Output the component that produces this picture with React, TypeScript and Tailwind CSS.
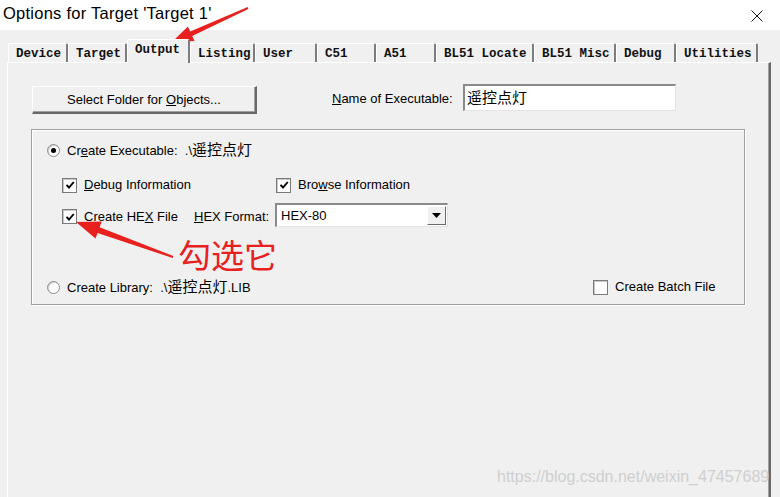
import React from "react";

const UI: React.CSSProperties = {
  fontFamily: '"Liberation Sans", "Noto Sans CJK SC", sans-serif',
};

function Check({ checked }: { checked: boolean }) {
  return (
    <div className="w-[15px] h-[15px] bg-white border border-[#7a7a7a] shadow-[inset_1px_1px_0_#c8c8c8] flex items-center justify-center shrink-0">
      {checked && (
        <svg width="10" height="10" viewBox="0 0 10 10">
          <path d="M1.5 4.8 L4 7.5 L8.8 2" fill="none" stroke="#000" strokeWidth="1.9" />
        </svg>
      )}
    </div>
  );
}

function Radio({ on }: { on: boolean }) {
  return (
    <div className="w-[13px] h-[13px] rounded-full bg-white border border-[#8c8c8c] shadow-[inset_1px_1px_0_#cfcfcf] flex items-center justify-center shrink-0">
      {on && <div className="w-[5px] h-[5px] rounded-full bg-black" />}
    </div>
  );
}

const tabs: { label: string; w: number; sel?: boolean }[] = [
  { label: "Device", w: 60 },
  { label: "Target", w: 59 },
  { label: "Output", w: 63, sel: true },
  { label: "Listing", w: 65 },
  { label: "User", w: 62 },
  { label: "C51", w: 59 },
  { label: "A51", w: 60 },
  { label: "BL51 Locate", w: 98 },
  { label: "BL51 Misc", w: 82 },
  { label: "Debug", w: 60 },
  { label: "Utilities", w: 82 },
];

export default function App() {
  return (
    <div
      className="relative w-[780px] h-[497px] bg-[#f0f0f0] overflow-hidden flex flex-col text-black"
      style={UI}
    >
      {/* Title bar */}
      <div className="h-[30px] bg-white flex items-start justify-between shrink-0">
        <div className="pl-[3px] pt-[2px] text-[16.5px] tracking-[0.25px] leading-[22px]">Options for Target 'Target 1'</div>
        <div className="pr-[17px] pt-[10px]">
          <svg width="12" height="12" viewBox="0 0 12 12">
            <path d="M0.5 0.5 L11.5 11.5 M11.5 0.5 L0.5 11.5" stroke="#111" strokeWidth="1" />
          </svg>
        </div>
      </div>

      {/* Tabs */}
      <div className="h-[32px] pt-[9px] pl-[8px] flex items-end shrink-0">
        {tabs.map((t) => (
          <div
            key={t.label}
            style={{ width: t.w, fontFamily: '"Liberation Mono", "DejaVu Sans Mono", monospace' }}
            className={
              t.sel
                ? "relative z-10 h-[24px] -mb-[1px] bg-[#f0f0f0] border-l border-t border-white border-r-2 border-r-[#7d7d7d] rounded-t-[2px] pl-[7px] pt-[2px] text-[12.5px] font-bold leading-[16px] whitespace-pre text-[#111]"
                : "h-[19px] bg-[#f0f0f0] border-l border-t border-white border-r-2 border-r-[#7d7d7d] rounded-t-[2px] pl-[7px] pt-[2px] text-[12.5px] font-bold leading-[16px] whitespace-pre text-[#111]"
            }
          >
            {t.label}
          </div>
        ))}
      </div>

      {/* Panel */}
      <div className="ml-[7px] w-[764px] flex-1 border-l border-t border-white border-r-2 border-r-[#696969] shadow-[inset_-1px_0_0_#a0a0a0] pl-[23px] pt-[21px] text-[13px]">
        {/* Top row */}
        <div className="flex items-start">
          <div className="mt-[2px] ml-[1px] w-[225px] h-[28px] bg-[#f0f0f0] border-l border-t border-white border-r-2 border-b-2 border-r-[#696969] border-b-[#696969] shadow-[inset_-1px_-1px_0_#a0a0a0] flex items-center justify-center">
            <span>
              Select Folder for <span className="underline">O</span>bjects...
            </span>
          </div>
          <div className="ml-[75px] w-[131px] h-[29px] flex items-center">
            <span>
              <span className="underline">N</span>ame of Executable:
            </span>
          </div>
          <div className="w-[213px] h-[27px] bg-white border-l-2 border-t-2 border-[#8a8a8a] border-r border-b border-r-[#e3e3e3] border-b-[#e3e3e3] flex items-center pl-[2px] text-[15px]">
            遥控点灯
          </div>
        </div>

        {/* Group box */}
        <div className="mt-[15px] w-[714px] h-[176px] border border-[#a0a0a0] shadow-[inset_1px_1px_0_#fff,1px_1px_0_#fff] pt-[10px]">
          {/* Row 1 */}
          <div className="h-[20px] flex items-center pl-[15px]">
            <Radio on />
            <span className="ml-[7px]">
              Cr<span className="underline">e</span>ate Executable:&nbsp; .\<span className="text-[15px]">遥控点灯</span>
            </span>
          </div>

          {/* Row 2 */}
          <div className="mt-[15px] h-[20px] flex items-center pl-[30px]">
            <div className="w-[214px] flex items-center">
              <Check checked />
              <span className="ml-[7px]">
                <span className="underline">D</span>ebug Information
              </span>
            </div>
            <div className="flex items-center">
              <Check checked />
              <span className="ml-[7px]">
                Bro<span className="underline">w</span>se Information
              </span>
            </div>
          </div>

          {/* Row 3 */}
          <div className="mt-[8px] h-[24px] flex items-center pl-[30px]">
            <div className="w-[132px] flex items-center pt-[3px]">
              <Check checked />
              <span className="ml-[7px]">
                Create HE<span className="underline">X</span> File
              </span>
            </div>
            <div className="w-[81px] pt-[3px]">
              <span className="underline">H</span>EX Format:
            </div>
            <div className="w-[173px] h-[24px] bg-white border-l-2 border-t-2 border-[#8a8a8a] border-r border-b border-r-[#e3e3e3] border-b-[#e3e3e3] flex items-center">
              <span className="pl-[4px] flex-1">HEX-80</span>
              <div className="w-[19px] h-[19px] mr-[1px] bg-[#f0f0f0] border-l border-t border-white border-r border-b border-r-[#696969] border-b-[#696969] flex items-center justify-center">
                <svg width="9" height="5" viewBox="0 0 9 5">
                  <path d="M0 0 H9 L4.5 5 Z" fill="#000" />
                </svg>
              </div>
            </div>
          </div>

          {/* Annotation */}
          <div
            className="mt-[11px] ml-[146px] h-[33px] text-[33px] leading-none text-[#e8201e]"
            style={{ fontFamily: '"Noto Sans CJK SC", sans-serif' }}
          >
            勾选它
          </div>

          {/* Row 4 */}
          <div className="mt-[6px] h-[20px] flex items-center pl-[15px]">
            <div className="flex-1 flex items-center">
              <Radio on={false} />
              <span className="ml-[7px]">
                Create Library:&nbsp; .\<span className="text-[15px]">遥控点灯</span>.LIB
              </span>
            </div>
            <div className="w-[151px] flex items-center">
              <Check checked={false} />
              <span className="ml-[7px]">Create Batch File</span>
            </div>
          </div>
        </div>
      </div>

      {/* Watermark */}
      <div className="absolute left-[497px] top-[467px] text-[16px] leading-[20px] text-[#cfcfcf] whitespace-nowrap">
        https://blog.csdn.net/weixin_47457689
      </div>

      {/* Red arrows */}
      <svg className="absolute left-0 top-0 pointer-events-none" width="780" height="497" viewBox="0 0 780 497">
        <polygon
          points="172,42 194.5,41 192.2,36 248.3,8.9 247.7,7.1 190.2,31.4 187.9,26.4"
          fill="#e8201e"
        />
        <polygon
          points="76,222 95.5,238.6 97.6,232.9 172.7,258 173.3,256 99.6,227.3 101.7,221.6"
          fill="#e8201e"
        />
      </svg>
    </div>
  );
}
